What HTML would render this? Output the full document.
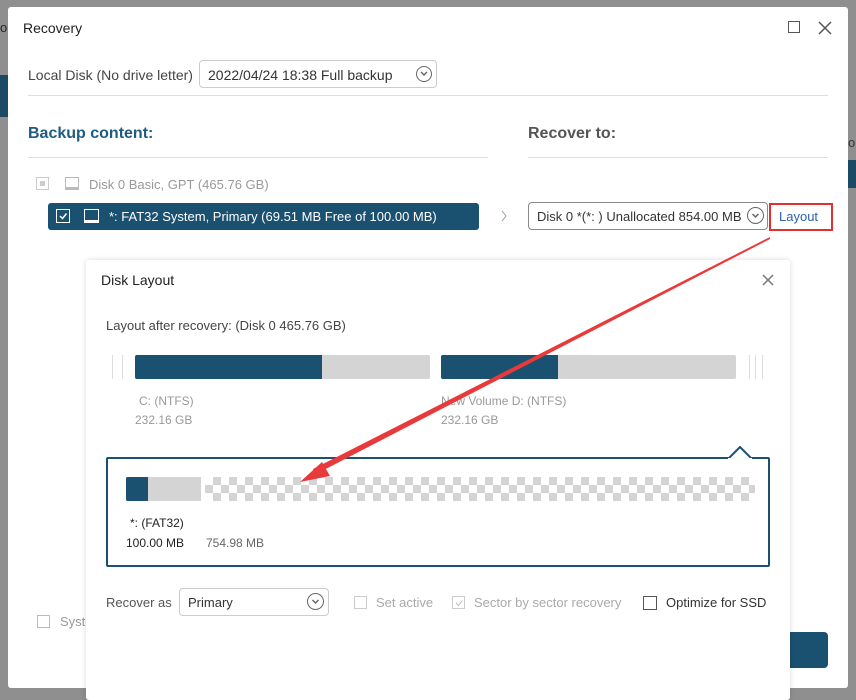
<!DOCTYPE html>
<html><head><style>
*{box-sizing:border-box;margin:0;padding:0}
body{width:856px;height:696px;overflow:hidden;background:#8f8f8f;font-family:"Liberation Sans",sans-serif;position:relative;color:#333}
.a{position:absolute}
.t{font-size:13px;white-space:nowrap}
.cb{position:absolute;width:13px;height:13px;border:1px solid #666;background:#fff}
</style></head><body>
<!-- background app bits -->
<div class="a" style="left:0;top:75px;width:8px;height:42px;background:#1a4a66"></div>
<div class="a t" style="left:0;top:20px;color:#222">o</div>
<div class="a" style="left:848px;top:160px;width:8px;height:28px;background:#1a4a66"></div>
<div class="a t" style="left:848px;top:135px;color:#333">o</div>

<!-- main dialog -->
<div class="a" style="left:8px;top:7px;width:840px;height:681px;background:#fff;border-radius:3px"></div>
<div class="a t" style="left:23px;top:20px;font-size:14px;color:#222">Recovery</div>
<div class="a" style="left:788px;top:21px;width:12px;height:12px;border:1.5px solid #555"></div>
<svg class="a" style="left:818px;top:21px" width="14" height="14"><path d="M1 1L13 13M13 1L1 13" stroke="#555" stroke-width="1.5"/></svg>

<div class="a t" style="left:28px;top:67px;font-size:14px;color:#444">Local Disk (No drive letter)</div>
<div class="a" style="left:199px;top:60px;width:238px;height:28px;border:1px solid #ccc;border-radius:4px"></div>
<div class="a t" style="left:208px;top:67px;font-size:14px;color:#333">2022/04/24 18:38 Full backup</div>
<div class="a" style="left:416px;top:66px;width:16px;height:16px;border:1.5px solid #666;border-radius:50%"></div>
<svg class="a" style="left:419px;top:69px" width="10" height="10"><path d="M2 3L5 6L8 3" stroke="#666" fill="none" stroke-width="1.5"/></svg>
<div class="a" style="left:28px;top:95px;width:800px;height:1px;background:#ddd"></div>

<div class="a t" style="left:28px;top:125px;font-size:16px;font-weight:bold;color:#1e5b80">Backup content:</div>
<div class="a" style="left:28px;top:157px;width:460px;height:1px;background:#ddd"></div>
<div class="a t" style="left:528px;top:125px;font-size:16px;font-weight:bold;color:#555">Recover to:</div>
<div class="a" style="left:528px;top:157px;width:300px;height:1px;background:#ddd"></div>

<div class="cb" style="left:36px;top:177px;border-color:#ccc"></div>
<div class="a" style="left:40px;top:181px;width:5px;height:5px;background:#ccc"></div>
<div class="a" style="left:65px;top:177px;width:14px;height:13px;border:1px solid #bbb;border-bottom-width:3px"></div>
<div class="a t" style="left:89px;top:177px;color:#999">Disk 0 Basic, GPT (465.76 GB)</div>

<div class="a" style="left:48px;top:203px;width:431px;height:27px;background:#1a5070;border-radius:3px"></div>
<div class="a" style="left:56px;top:209px;width:14px;height:14px;border:1.5px solid #fff"></div>
<svg class="a" style="left:58px;top:211px" width="10" height="10"><path d="M2 5L4.5 7.5L8.5 2.5" stroke="#fff" fill="none" stroke-width="1.5"/></svg>
<div class="a" style="left:84px;top:209px;width:15px;height:14px;border:1.5px solid #fff;border-bottom-width:3px"></div>
<div class="a t" style="left:109px;top:209px;color:#fff">*: FAT32 System, Primary (69.51 MB Free of 100.00 MB)</div>

<svg class="a" style="left:500px;top:210px" width="8" height="12"><path d="M2 1L6 6L2 11" stroke="#999" fill="none"/></svg>
<div class="a" style="left:528px;top:202px;width:240px;height:28px;border:1px solid #888;border-radius:4px"></div>
<div class="a t" style="left:537px;top:209px;color:#333">Disk 0 *(*: ) Unallocated 854.00 MB</div>
<div class="a" style="left:747px;top:207px;width:17px;height:17px;border:1.5px solid #666;border-radius:50%"></div>
<svg class="a" style="left:750px;top:210px" width="11" height="11"><path d="M2.5 4L5.5 7L8.5 4" stroke="#666" fill="none" stroke-width="1.5"/></svg>
<div class="a" style="left:769px;top:203px;width:64px;height:28px;border:2.5px solid #e03030"></div>
<div class="a t" style="left:779px;top:209px;color:#2a62b0">Layout</div>

<div class="cb" style="left:37px;top:615px;border-color:#bbb"></div>
<div class="a t" style="left:60px;top:614px;color:#999">System</div>
<div class="a" style="left:760px;top:632px;width:68px;height:36px;background:#1a5070;border-radius:4px"></div>

<!-- popup -->
<div class="a" style="left:86px;top:260px;width:704px;height:440px;background:#fff;box-shadow:0 0 6px rgba(0,0,0,.15);border-radius:3px"></div>
<div class="a t" style="left:101px;top:272px;font-size:14px;color:#222">Disk Layout</div>
<svg class="a" style="left:762px;top:274px" width="12" height="12"><path d="M1 1L11 11M11 1L1 11" stroke="#777" stroke-width="1.5"/></svg>
<div class="a t" style="left:106px;top:318px;color:#444">Layout after recovery: (Disk 0 465.76 GB)</div>

<div class="a" style="left:112px;top:355px;width:1px;height:24px;background:#ddd"></div>
<div class="a" style="left:122px;top:355px;width:1px;height:24px;background:#ddd"></div>
<div class="a" style="left:135px;top:355px;width:295px;height:24px;background:#d4d4d4;border-radius:2px"></div>
<div class="a" style="left:135px;top:355px;width:187px;height:24px;background:#1a5070;border-radius:2px 0 0 2px"></div>
<div class="a" style="left:441px;top:355px;width:295px;height:24px;background:#d4d4d4;border-radius:2px"></div>
<div class="a" style="left:441px;top:355px;width:117px;height:24px;background:#1a5070;border-radius:2px 0 0 2px"></div>
<div class="a" style="left:749px;top:355px;width:1px;height:24px;background:#ddd"></div>
<div class="a" style="left:755px;top:355px;width:1px;height:24px;background:#ddd"></div>
<div class="a" style="left:762px;top:355px;width:1px;height:24px;background:#ddd"></div>
<div class="a t" style="left:139px;top:394px;color:#999;font-size:12px">C: (NTFS)</div>
<div class="a t" style="left:135px;top:413px;color:#999;font-size:12px">232.16 GB</div>
<div class="a t" style="left:441px;top:394px;color:#999;font-size:12px">New Volume D: (NTFS)</div>
<div class="a t" style="left:441px;top:413px;color:#999;font-size:12px">232.16 GB</div>

<div class="a" style="left:106px;top:457px;width:664px;height:110px;border:2px solid #1a5070;border-radius:2px"></div>
<svg class="a" style="left:728px;top:446px" width="24" height="14"><path d="M0 13L12 1L24 13" fill="#fff" stroke="#1a5070" stroke-width="2"/><rect x="0" y="12" width="24" height="3" fill="#fff"/></svg>
<div class="a" style="left:126px;top:477px;width:75px;height:24px;background:#d4d4d4"></div>
<div class="a" style="left:126px;top:477px;width:22px;height:24px;background:#1a5070;border-radius:2px 0 0 2px"></div>
<div class="a" style="left:205px;top:477px;width:550px;height:24px;background:repeating-conic-gradient(#d4d4d4 0 25%,#fff 0 50%) 0 0/16px 16px"></div>
<div class="a t" style="left:130px;top:516px;color:#222;font-size:12px">*: (FAT32)</div>
<div class="a t" style="left:126px;top:536px;color:#222;font-size:12px">100.00 MB</div>
<div class="a t" style="left:206px;top:536px;color:#666;font-size:12px">754.98 MB</div>

<div class="a t" style="left:106px;top:595px;color:#555">Recover as</div>
<div class="a" style="left:179px;top:588px;width:150px;height:28px;border:1px solid #ccc;border-radius:4px"></div>
<div class="a t" style="left:188px;top:595px;color:#333">Primary</div>
<div class="a" style="left:307px;top:593px;width:17px;height:17px;border:1.5px solid #666;border-radius:50%"></div>
<svg class="a" style="left:310px;top:596px" width="11" height="11"><path d="M2.5 4L5.5 7L8.5 4" stroke="#666" fill="none" stroke-width="1.5"/></svg>
<div class="cb" style="left:354px;top:596px;border-color:#ccc"></div>
<div class="a t" style="left:376px;top:595px;color:#aaa">Set active</div>
<div class="cb" style="left:452px;top:596px;border-color:#ccc"></div>
<svg class="a" style="left:454px;top:598px" width="10" height="10"><path d="M2 5L4.5 7.5L8.5 2.5" stroke="#bbb" fill="none"/></svg>
<div class="a t" style="left:474px;top:595px;color:#aaa">Sector by sector recovery</div>
<div class="cb" style="left:643px;top:596px;width:14px;height:14px;border-color:#555"></div>
<div class="a t" style="left:666px;top:595px;color:#333">Optimize for SSD</div>

<!-- red arrow -->
<svg class="a" style="left:0;top:0" width="856" height="696">
<polygon points="770,237 770,239 316,474 313,469" fill="#e83a3a"/>
<polygon points="300,482 322,462 330,476" fill="#e83a3a"/>
</svg>
</body></html>
